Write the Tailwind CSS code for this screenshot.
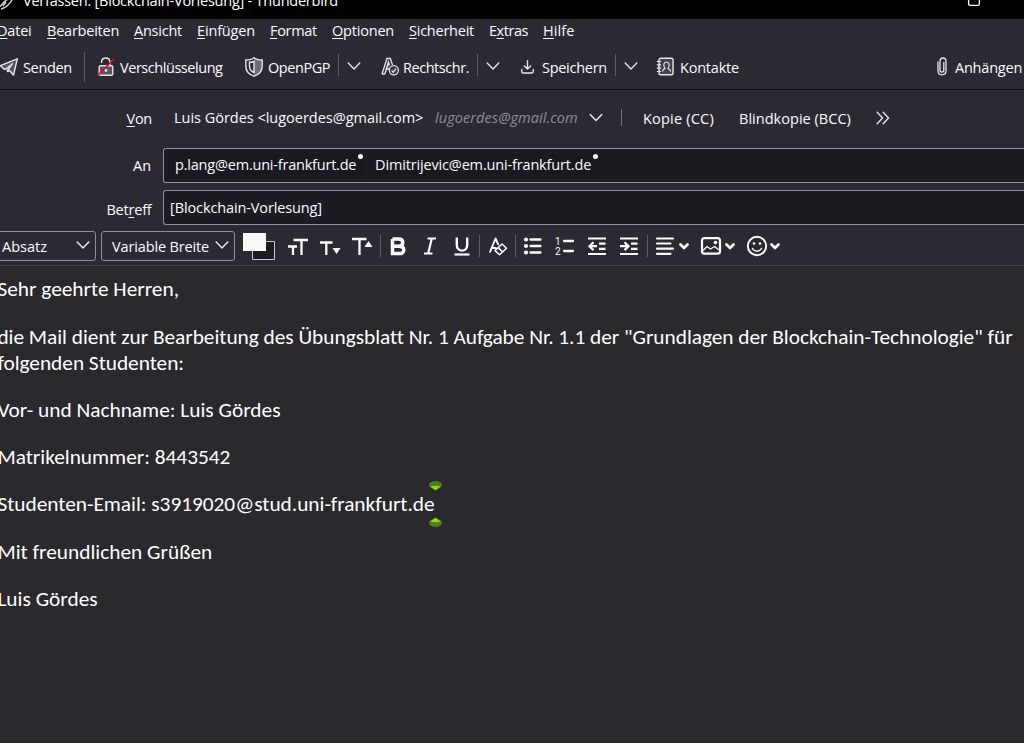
<!DOCTYPE html>
<html lang="de"><head><meta charset="utf-8"><title>Verfassen</title>
<script src="https://cdn.jsdelivr.net/npm/@tailwindcss/browser@4"></script></head>
<body class="w-[1024px] h-[743px] overflow-hidden flex flex-col bg-[#2a292e] text-[#fbfbfe] font-['Open_Sans',sans-serif] text-[14.5px] leading-5 whitespace-nowrap">

<header class="h-[19px] shrink-0 bg-black overflow-hidden flex">
  <svg class="w-[15px] h-[19px] shrink-0" viewBox="0 0 15 19" fill="none" stroke="#d8d8dc" stroke-width="1.4"><path d="M0 6.5 4 2 8 -1M1 9C6 8 9 5 12 0M3 6l3-4"/></svg>
  <span class="ml-2 -mt-[9px] w-[315px] tracking-[-0.23px] text-white">Verfassen: [Blockchain-Vorlesung] - Thunderbird</span>
  <svg class="ml-[629px] w-[14px] h-[7px] shrink-0" viewBox="0 0 14 7" fill="none" stroke="#fff" stroke-width="1.3"><path d="M1.6 -3V4Q1.6 5.4 3 5.4H11Q12.4 5.4 12.4 4V-3"/></svg>
</header>

<nav class="h-[25px] shrink-0 bg-[#2b2a33] flex items-start pt-[2px] gap-[15px]">
  <span class="-ml-[3px] w-[35px] tracking-[-0.2px]"><u class="underline-offset-2">D</u>atei</span>
  <span class="w-[72px] tracking-[-0.23px]"><u class="underline-offset-2">B</u>earbeiten</span>
  <span class="w-[48px] tracking-[-0.24px]"><u class="underline-offset-2">A</u>nsicht</span>
  <span class="w-[58px] tracking-[-0.16px]"><u class="underline-offset-2">E</u>infügen</span>
  <span class="w-[47px] tracking-[-0.3px]"><u class="underline-offset-2">F</u>ormat</span>
  <span class="w-[62px] tracking-[-0.2px]"><u class="underline-offset-2">O</u>ptionen</span>
  <span class="w-[65px] tracking-[-0.24px]"><u class="underline-offset-2">S</u>icherheit</span>
  <span class="w-[39px] tracking-[-0.46px]">E<u class="underline-offset-2">x</u>tras</span>
  <span class="w-[32px] tracking-[0.1px]"><u class="underline-offset-2">H</u>ilfe</span>
</nav>

<div class="h-[46px] shrink-0 bg-[#2b2a33] border-b border-[#0c0c0e] flex items-center">
  <svg class="w-[19px] h-5 shrink-0" viewBox="0 0 19 20" fill="#55545d" stroke="#e6e6ea" stroke-width="1.4" stroke-linejoin="round"><path d="M17.300 1.800.3 8.600 4.500 12.400 7.200 11 7.500 14.500 9.500 13.500 13.500 18Z"/><path d="M7.200 11 12.500 6.700 8 12.800"/></svg>
  <span class="mt-[2px] ml-1 w-[49px] tracking-[-0.33px]">Senden</span>
  <i class="ml-3 w-px h-[30px] bg-[#5b5a64]"></i>
  <svg class="ml-3 w-[18px] h-5 shrink-0" viewBox="0 0 18 20" fill="none"><path d="M4.500 6V5.500C4.500 2 6.500 1 9 1S13 2.500 13 6V8" stroke="#e6e6ea" stroke-width="1.500"/><rect x="2.200" y="8.700" width="13.600" height="9.500" rx="1.500" fill="#55545d" stroke="#e6e6ea" stroke-width="1.400"/><circle cx="9" cy="13.500" r="1.400" fill="#e6e6ea"/><path d="M.8 18.500 17 2" stroke="#e2083f" stroke-width="1.700"/></svg>
  <span class="mt-[2px] ml-[5px] w-[103px] tracking-[-0.45px]">Verschlüsselung</span>
  <svg class="ml-[22px] w-[18px] h-5 shrink-0" viewBox="0 0 18 20" fill="none" stroke="#e6e6ea" stroke-width="1.400"><path d="M9 .8C11 2.500 14 3 17.200 3V9C17.200 14 14 17.500 9 19.200V.8Z" fill="#6f6e77" stroke="none"/><path d="M9 .8C11 2.500 14 3 17.200 3V9C17.200 14 14 17.500 9 19.200 4 17.500.8 14 .8 9V3C4 3 7 2.500 9 .8Z"/><path d="M9 4.500C7.500 5 6 5.300 4.500 5.300V9C4.500 12 6 14.200 9 15.600Z"/></svg>
  <span class="mt-[2px] ml-[5px] w-[62px] tracking-[-0.44px]">OpenPGP</span>
  <i class="ml-2 mt-[-3px] w-px h-[22px] bg-[#5b5a64]"></i>
  <svg class="ml-[8px] -mt-[2px] w-[14px] h-[10px] shrink-0" viewBox="0 0 14 10" fill="none" stroke="#e6e6ea" stroke-width="1.4" stroke-linecap="round"><path d="M1.200 2 7 8 12.800 2"/></svg>
  <svg class="mt-px ml-[20px] w-[19px] h-5 shrink-0" viewBox="0 0 19 20" fill="none" stroke="#e6e6ea" stroke-width="1.300"><path d="M4 14 7 4 8.500 8 6 12Z" fill="#85848c" stroke="none"/><path d="M1 17 6 1.500H9.300L11.500 8M3.800 17 7.500 5 8.500 8.500M1 17H3.800M5.500 12H8"/><circle cx="12.800" cy="13.300" r="4.600" fill="#3a3942"/><path d="m10.600 13.500 1.600 1.700 2.900-3.600"/></svg>
  <span class="mt-[2px] ml-[3px] w-[66px] tracking-[-0.46px]">Rechtschr.</span>
  <i class="ml-2 mt-[-3px] w-px h-[22px] bg-[#5b5a64]"></i>
  <svg class="ml-[8px] -mt-[2px] w-[14px] h-[10px] shrink-0" viewBox="0 0 14 10" fill="none" stroke="#e6e6ea" stroke-width="1.4" stroke-linecap="round"><path d="M1.200 2 7 8 12.800 2"/></svg>
  <svg class="ml-[21px] w-[13px] h-[14px] shrink-0" viewBox="0 0 13 14" fill="none" stroke="#e6e6ea" stroke-width="1.400" stroke-linecap="round" stroke-linejoin="round"><path d="M6.500.8V8.800M3.300 6 6.500 9 9.700 6M.8 9.500V11.500Q.8 13 2.300 13H10.700Q12.200 13 12.200 11.500V9.500"/></svg>
  <span class="mt-[2px] ml-2 w-[65px] tracking-[-0.28px]">Speichern</span>
  <i class="ml-2 mt-[-3px] w-px h-[22px] bg-[#5b5a64]"></i>
  <svg class="ml-[8px] -mt-[2px] w-[14px] h-[10px] shrink-0" viewBox="0 0 14 10" fill="none" stroke="#e6e6ea" stroke-width="1.4" stroke-linecap="round"><path d="M1.200 2 7 8 12.800 2"/></svg>
  <svg class="ml-[18px] w-[18px] h-5 shrink-0" viewBox="0 0 18 20" fill="none" stroke="#e6e6ea" stroke-width="1.400"><rect x="3" y="1.200" width="14" height="16.600" rx="1.800" fill="#44434c"/><path d="M.8 4.500H5M.8 7.800H5M.8 11.200H5M.8 14.500H5" stroke-width="1.200"/><path d="M6.500 14.500C6.500 12.500 8 12 9 11.500 7 8.500 7.500 5 10.500 5S14 8.500 12 11.500C13 12 14.500 12.500 14.500 14.500" stroke-width="1.200"/></svg>
  <span class="mt-[2px] ml-[6px] w-[59px] tracking-[-0.21px]">Kontakte</span>
  <svg class="ml-[198px] w-[10px] h-[19px] shrink-0" viewBox="0 0 10 19" fill="none" stroke="#e6e6ea" stroke-width="1.300" stroke-linecap="round"><path d="M1 5V13.500C1 19.200 9 19.200 9 13.500V4.500C9 -.2 3 -.2 3 4.500V13C3 15.800 6.800 15.800 6.800 13V5.500"/></svg>
  <span class="mt-[2px] ml-2 w-[67px] tracking-[-0.22px]">Anhängen</span>
</div>

<section class="h-[139px] shrink-0 bg-[#2b2a33] flex flex-col">
  <div class="h-[56px] flex items-center">
    <span class="w-[152px] text-right mt-[2px] tracking-[-0.25px]"><u class="underline-offset-2">V</u>on</span>
    <span class="ml-[22px] w-[250px] tracking-[-0.02px]">Luis Gördes &lt;lugoerdes@gmail.com&gt;</span>
    <em class="ml-[11px] w-[143px] text-[#8f8e96] tracking-[0.07px]">lugoerdes@gmail.com</em>
    <svg class="ml-[11px] -mt-px w-[14px] h-[10px] shrink-0" viewBox="0 0 14 10" fill="none" stroke="#e6e6ea" stroke-width="1.500" stroke-linecap="round"><path d="M1.200 1.500 7 7.500 12.800 1.500"/></svg>
    <i class="ml-[18px] -mt-px w-px h-[17px] bg-[#77767e]"></i>
    <span class="ml-[21px] mt-[2px] w-[71px] tracking-[0.2px]">Kopie (CC)</span>
    <span class="ml-[25px] mt-[2px] w-[112px] tracking-[0.03px]">Blindkopie (BCC)</span>
    <svg class="ml-[25px] w-[14px] h-[14px] shrink-0" viewBox="0 0 14 14" fill="none" stroke="#e6e6ea" stroke-width="1.400" stroke-linecap="round"><path d="M1.200 1.200 6.500 7 1.200 12.800M7.200 1.200 12.500 7 7.200 12.800"/></svg>
  </div>
  <div class="h-[41px] flex">
    <span class="w-[151.500px] text-right mt-[10px]">An</span>
    <div class="ml-[11.500px] mt-[2px] h-[35px] w-[864px] border border-[#8f8f9d] border-r-0 rounded-l-[3px] bg-[#1c1b22] flex items-center gap-1 pl-[5px]">
      <span class="w-[196px] h-6 pl-[6.5px] leading-[22px] flex rounded-[3px] bg-[#19191f] tracking-[-0.21px]"><span class="w-[183px]">p.lang@em.uni-frankfurt.de</span><i class="w-[5px] h-[5px] shrink-0 rounded-full bg-white"></i></span>
      <span class="w-[231px] h-6 pl-[6.5px] leading-[22px] flex rounded-[3px] bg-[#19191f] tracking-[-0.16px]"><span class="w-[218px]">Dimitrijevic@em.uni-frankfurt.de</span><i class="w-[5px] h-[5px] shrink-0 rounded-full bg-white"></i></span>
    </div>
  </div>
  <div class="h-[42px] flex">
    <span class="w-[152px] text-right mt-[13px] tracking-[-0.2px]">Bet<u class="underline-offset-2">r</u>eff</span>
    <div class="ml-[11px] mt-[3px] h-[35px] w-[864px] border border-[#8f8f9d] border-r-0 rounded-l-[3px] bg-[#1c1b22] pl-[6.5px] pt-[7px] tracking-[-0.12px]">[Blockchain-Vorlesung]</div>
  </div>
</section>

<div class="h-[37px] shrink-0 bg-[#2b2a33] border-b border-[#45444c] flex items-start">
  <div class="-ml-[5px] mt-[2px] w-[101px] h-[30px] border border-[#8f8f9d] rounded-[3px] flex items-center pl-[6px] shrink-0"><span class="w-[74px] mt-px">Absatz</span><svg class="-mt-[2px] w-[14px] h-[10px]" viewBox="0 0 14 10" fill="none" stroke="#e6e6ea" stroke-width="1.500" stroke-linecap="round"><path d="M1.200 2 7 8 12.800 2"/></svg></div>
  <div class="ml-[5px] mt-[2px] w-[134px] h-[30px] border border-[#8f8f9d] rounded-[3px] flex items-center pl-[10px] shrink-0"><span class="w-[103px] mt-px tracking-[-0.14px]">Variable Breite</span><svg class="-mt-[2px] w-[14px] h-[10px]" viewBox="0 0 14 10" fill="none" stroke="#e6e6ea" stroke-width="1.500" stroke-linecap="round"><path d="M1.200 2 7 8 12.800 2"/></svg></div>
  <svg class="ml-[5px] mt-px w-[40px] h-[32px] shrink-0" viewBox="240 230 40 32"><path d="M252.500 241.500H274.500V259.500H252.500Z" fill="#1c1b22" stroke="#c8c8cc"/><path d="M243 233H266V251H243Z" fill="#f9f9fa"/></svg>
  <svg class="ml-[2px] mt-px w-[96px] h-[32px] shrink-0" viewBox="282 230 96 32" fill="none" stroke="#fbfbfe" stroke-width="2.300"><path d="M293.500 240H308M301.500 240V255M288 246.500H297M293 246.500V255"/><path d="M320 242.500H332.500M326.300 242.500V255M352 239H366.500M359.500 239V255"/><path d="M332.500 248H340.500L336.500 254ZM364.500 247H372.500L368.500 241Z" fill="#fbfbfe" stroke="none"/></svg>
  <i class="ml-[2px] mt-[6px] w-px h-[22px] bg-[#5b5a64]"></i>
  <svg class="ml-px mt-px w-[97px] h-[32px] shrink-0" viewBox="382 230 97 32" fill="none" stroke="#fbfbfe" stroke-width="2.200"><path d="M392.500 239H398.500Q402.800 239 402.800 242.600T398.500 246.300H392.500M398.500 246.300Q403.800 246.300 403.800 250T399 253.600H392.500V239" stroke-width="3.500"/><path d="M427.500 238.500H436M424 253.500H432.500M431.800 238.500 428.200 253.500"/><path d="M456.800 237.500V245C456.800 252.500 467.200 252.500 467.200 245V237.500" stroke-width="2.400"/><path d="M454.500 254.500H469.500"/></svg>
  <i class="mt-[6px] w-px h-[22px] bg-[#5b5a64]"></i>
  <svg class="ml-[2px] mt-px w-[33px] h-[32px] shrink-0" viewBox="482 230 33 32" fill="none" stroke="#fbfbfe" stroke-width="1.900" stroke-linejoin="round"><path d="M489.800 252.500 495.500 238.500 498.500 245M491.500 248H496.500"/><path d="M502 244 506.500 248.300 499.500 254.800 495 250.600ZM498.200 247.600 502.600 252" stroke-width="1.500"/></svg>
  <i class="mt-[6px] w-px h-[22px] bg-[#5b5a64]"></i>
  <svg class="ml-[2px] mt-px w-[129px] h-[32px] shrink-0" viewBox="518 230 129 32" fill="none" stroke="#fbfbfe" stroke-width="2.300"><path d="M530.500 239.500H540.500M530.500 246H540.500M530.500 252.500H540.500M564 241H573M564 251H573" stroke-linecap="round"/><g fill="#fbfbfe" stroke="none"><circle cx="526" cy="239.500" r="2.100"/><circle cx="526" cy="246" r="2.100"/><circle cx="526" cy="252.500" r="2.100"/></g><text x="555" y="244.500" fill="#fbfbfe" stroke="none" class="font-['Roboto'] text-[10px]">1</text><text x="555" y="255" fill="#fbfbfe" stroke="none" class="font-['Roboto'] text-[10px]">2</text><path d="M588 238.500H606M588 254H606M599 243.700H605.500M599 248.900H605.500M620 238.500H638M620 254H638M631 243.700H637.500M631 248.900H637.500" stroke-width="2.200"/><path d="M597 246.200H590M593.500 242.300 589.500 246.200 593.500 250.100M620 246.200H628M624.500 242.300 628.500 246.200 624.500 250.100"/></svg>
  <i class="mt-[6px] w-px h-[22px] bg-[#5b5a64]"></i>
  <svg class="ml-[2px] mt-px w-[136px] h-[32px] shrink-0" viewBox="650 230 136 32" fill="none" stroke="#fbfbfe" stroke-width="2.200" stroke-linecap="round" stroke-linejoin="round"><path d="M657 238.500H673M657 243.500H670.500M657 248.700H673M657 253.800H670.500"/><path d="M680.500 244.500 684 248 687.500 244.500M726.500 244.500 730 248 733.500 244.500M771.500 244.500 775 248 778.500 244.500" stroke-width="2.700"/><rect x="702" y="238.200" width="18" height="15.500" rx="2.500"/><path d="M703.500 250 707 246.500 710.500 249 714.500 246.500 718.500 249.500" stroke-width="1.300"/><circle cx="715.500" cy="242.500" r="1.800" fill="#fbfbfe" stroke="none"/><circle cx="757" cy="246" r="9.200" stroke-width="1.900"/><path d="M752.500 248.500C754.500 252 759.500 252 761.500 248.500" stroke-width="1.500"/><circle cx="754" cy="243.500" r="1.300" fill="#fbfbfe" stroke="none"/><circle cx="760" cy="243.500" r="1.300" fill="#fbfbfe" stroke="none"/></svg>
</div>

<main class="-ml-[2.6px] pt-[10.2px] font-['Carlito','Lato',sans-serif] [font-variant-ligatures:none] text-[21.33px] leading-[26px] text-white flex flex-col gap-[21.2px]">
  <p>Sehr geehrte Herren,</p>
  <p class="pt-[0.5px] -mb-[0.5px] tracking-[-0.028px]">die Mail dient zur Bearbeitung des Übungsblatt Nr. 1 Aufgabe Nr. 1.1 der "Grundlagen der Blockchain-Technologie" für<br>folgenden Studenten:</p>
  <p>Vor- und Nachname: Luis Gördes</p>
  <p>Matrikelnummer: 8443542</p>
  <p class="relative tracking-[-0.02px]">Studenten-Email: s3919020@stud.uni-frankfurt.de
    <svg class="absolute left-[431px] -top-[11px] w-[14px] h-[48px]" viewBox="0 0 14 48"><ellipse cx="7.500" cy="5" rx="6.500" ry="4" fill="#4f7d17"/><path d="M2.500 6.500Q7.500 5 12.500 6.500L7.500 10.500Z" fill="#8ce000"/><ellipse cx="7.500" cy="43" rx="6.500" ry="4" fill="#4f7d17"/><path d="M2.500 41.500Q7.500 43 12.500 41.500L7.500 37.500Z" fill="#8ce000"/></svg>
  </p>
  <p class="pt-[0.4px]">Mit freundlichen Grüßen</p>
  <p>Luis Gördes</p>
</main>
</body></html>
